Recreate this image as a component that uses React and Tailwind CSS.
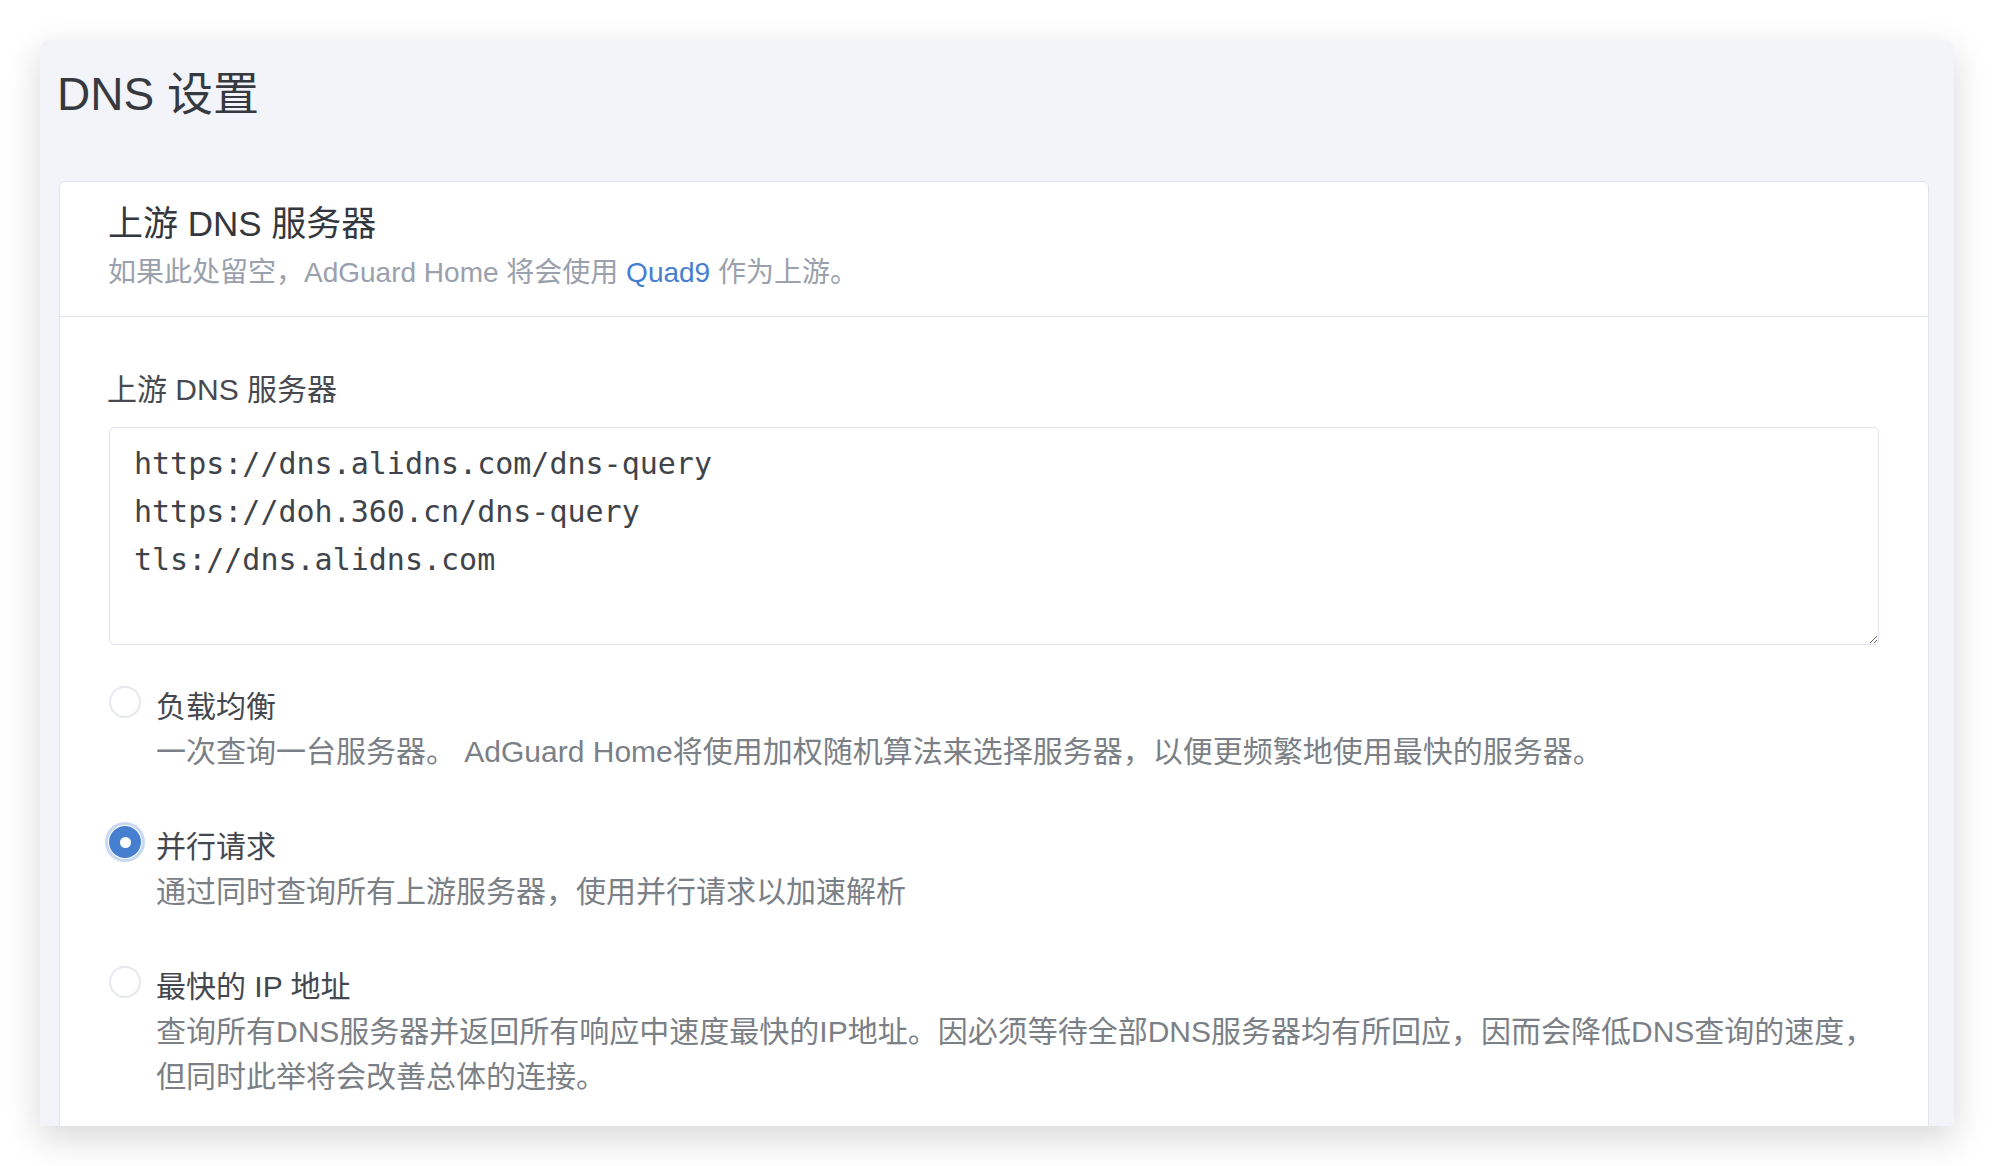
import React from 'react';

const SANS = "font-['Liberation_Sans','Noto_Sans_CJK_SC',sans-serif]";

const servers = [
  'https://dns.alidns.com/dns-query',
  'https://doh.360.cn/dns-query',
  'tls://dns.alidns.com',
].join('\n');

const modes = [
  {
    id: 'load',
    label: '负载均衡',
    desc: ['一次查询一台服务器。 AdGuard Home将使用加权随机算法来选择服务器，以便更频繁地使用最快的服务器。'],
  },
  {
    id: 'parallel',
    label: '并行请求',
    desc: ['通过同时查询所有上游服务器，使用并行请求以加速解析'],
  },
  {
    id: 'fastest',
    label: '最快的 IP 地址',
    desc: [
      '查询所有DNS服务器并返回所有响应中速度最快的IP地址。因必须等待全部DNS服务器均有所回应，因而会降低DNS查询的速度，',
      '但同时此举将会改善总体的连接。',
    ],
  },
];

function Radio({ checked }) {
  if (checked) {
    return (
      <span className="mt-[2px] flex h-[32px] w-[32px] shrink-0 items-center justify-center rounded-full bg-[#467fcf] shadow-[0_0_0_1px_#fff,0_0_0_4px_rgba(70,127,207,0.3)]">
        <span className="h-[11px] w-[11px] rounded-full bg-white" />
      </span>
    );
  }
  return <span className="mt-[2px] h-[32px] w-[32px] shrink-0 rounded-full border-2 border-[#e5e8ee] bg-white" />;
}

export default function App() {
  const selected = 'parallel';

  return (
    <div className={`h-[1166px] w-[1994px] overflow-hidden bg-white pl-[40px] pt-[40px] ${SANS}`}>
      <div className="h-[1086px] w-[1914px] overflow-hidden rounded-t-[10px] bg-[#f2f4f9] pl-[19px] pr-[25px] shadow-[0_12px_36px_rgba(0,0,0,0.16)]">
        <h1 className="-ml-[2px] mb-[62px] pt-[29px] text-[46px] leading-[50px] text-[#363a40]">DNS 设置</h1>

        <div className="rounded-[6px] border border-[#e0e4eb] bg-white">
          {/* card header */}
          <div className="border-b border-[#e0e4eb] pb-[23px] pl-[48px] pr-[50px] pt-[21px]">
            <h2 className="text-[35px] leading-[42px] text-[#34383e]">上游 DNS 服务器</h2>
            <p className="mt-[8px] text-[28px] leading-[40px] text-[#9aa0ac]">
              如果此处留空，AdGuard Home 将会使用 <span className="text-[#467fcf]">Quad9</span> 作为上游。
            </p>
          </div>

          {/* card body */}
          <div className="px-[49px] pb-[60px] pt-[50px]">
            <label className="-ml-[2px] mb-[15px] block text-[30px] leading-[45px] text-[#464a50]">上游 DNS 服务器</label>
            <textarea
              rows={4}
              defaultValue={servers}
              spellCheck={false}
              className="block h-[218px] w-full rounded-[5px] border border-[#dfe3ea] bg-white px-[24px] py-[12px] font-['DejaVu_Sans_Mono',monospace] text-[30px] leading-[48px] text-[#3f444a] outline-none"
            />

            <div className="mt-[39px] flex flex-col gap-[50px]">
              {modes.map((m) => (
                <div key={m.id} className="flex gap-[15px]">
                  <Radio checked={m.id === selected} />
                  <div className="flex flex-col">
                    <span className="text-[30px] leading-[45px] text-[#44484e]">{m.label}</span>
                    <span className="text-[30px] leading-[45px] text-[#7b7f86]">
                      {m.desc.map((line, i) => (
                        <React.Fragment key={i}>
                          {i > 0 && <br />}
                          {line}
                        </React.Fragment>
                      ))}
                    </span>
                  </div>
                </div>
              ))}
            </div>
          </div>
        </div>
      </div>
    </div>
  );
}
